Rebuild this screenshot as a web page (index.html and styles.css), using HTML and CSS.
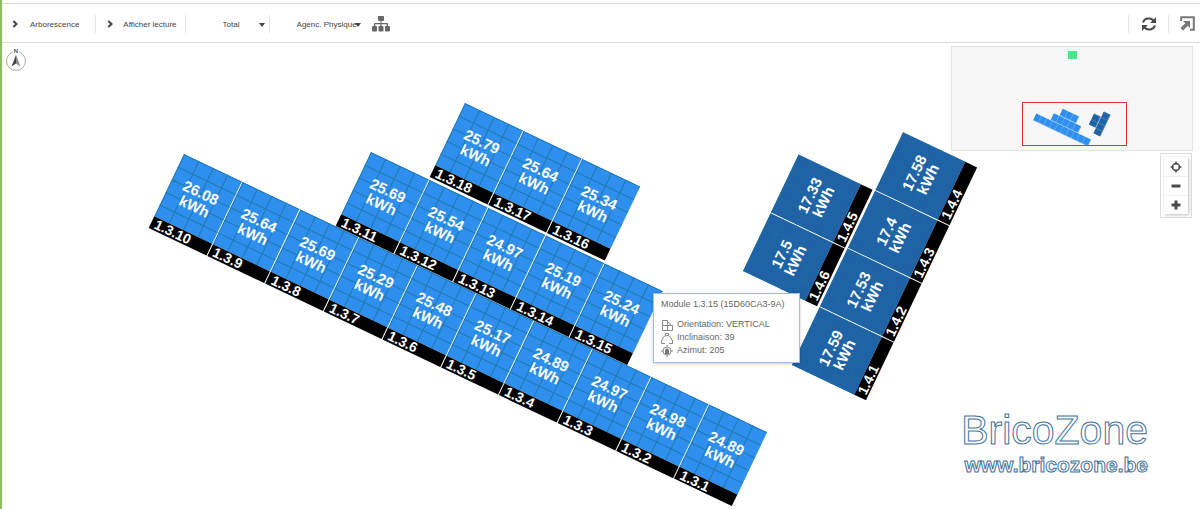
FILE: index.html
```
<!DOCTYPE html>
<html lang="fr">
<head>
  <meta charset="UTF-8">
  <meta name="viewport" content="width=device-width, initial-scale=1.0">
  <title>Agencement physique</title>
  <link rel="stylesheet" href="styles.css">
</head>
<body>
  <header class="toolbar">
    <button type="button" class="tool">
      <svg class="chevron" viewBox="0 0 6 8"><path d="M1.3 1 4.5 4 1.3 7"/></svg>
      Arborescence
    </button>
    <button type="button" class="tool">
      <svg class="chevron" viewBox="0 0 6 8"><path d="M1.3 1 4.5 4 1.3 7"/></svg>
      Afficher lecture
    </button>
    <div class="picker picker-period">
      <select aria-label="Période"><option>Total</option></select>
    </div>
    <div class="picker picker-layout">
      <select aria-label="Agencement"><option>Agenc. Physique</option></select>
    </div>
    <button type="button" class="icon-btn tree" aria-label="Arbre">
      <svg width="18" height="16" viewBox="0 0 18 16">
        <rect x="6" y="0" width="6" height="5" rx="1"/>
        <path d="M8.500 4h1v3H15a1 1 0 0 1 1 1v3h-1.300V8.300H9.600V11H8.400V8.300H3.300V11H2V8a1 1 0 0 1 1-1h5.500z"/>
        <rect x="0" y="10" width="5" height="5.500" rx="1"/>
        <rect x="6.500" y="10" width="5" height="5.500" rx="1"/>
        <rect x="13" y="10" width="5" height="5.500" rx="1"/>
      </svg>
    </button>
    <div class="right-tools">
      <button type="button" class="icon-btn" aria-label="Actualiser">
        <svg width="16" height="16" viewBox="0 0 16 16">
          <path class="arc" d="M2 6.500A6 5.500 0 0 1 12.500 4.500M14 9.500A6 5.500 0 0 1 3.500 11.500"/>
          <path d="M15 1v6H9.200zM1 15V9h5.800z"/>
        </svg>
      </button>
      <button type="button" class="icon-btn expand" aria-label="Plein écran">
        <svg width="16" height="16" viewBox="0 0 16 16">
          <path class="frame" d="M1.200 5V1.200h12.600v12.600H10"/>
          <path d="M3 5h7v7L7.800 9.800 3 14.500.500 12l4.800-4.700z"/>
        </svg>
      </button>
    </div>
  </header>

  <main class="map">
    <svg class="compass" width="22" height="26" viewBox="0 0 22 26">
      <circle cx="11" cy="15" r="9.500"/>
      <rect x="8" y="2" width="6" height="6"/>
      <text x="11" y="7" text-anchor="middle">N</text>
      <path class="dark" d="M11 9 6.500 20.500l4.500-3z"/>
      <path class="grey" d="M11 9l4.500 11.500-4.500-3z"/>
    </svg>

    <!-- String 1.3 -->
    <div class="array row-a">
      <div class="module"><p>26.08<br>kWh</p><b>1.3.10</b></div>
      <div class="module"><p>25.64<br>kWh</p><b>1.3.9</b></div>
      <div class="module"><p>25.69<br>kWh</p><b>1.3.8</b></div>
      <div class="module"><p>25.29<br>kWh</p><b>1.3.7</b></div>
      <div class="module"><p>25.48<br>kWh</p><b>1.3.6</b></div>
      <div class="module"><p>25.17<br>kWh</p><b>1.3.5</b></div>
      <div class="module"><p>24.89<br>kWh</p><b>1.3.4</b></div>
      <div class="module"><p>24.97<br>kWh</p><b>1.3.3</b></div>
      <div class="module"><p>24.98<br>kWh</p><b>1.3.2</b></div>
      <div class="module"><p>24.89<br>kWh</p><b>1.3.1</b></div>
    </div>
    <div class="array row-b">
      <div class="module"><p>25.69<br>kWh</p><b>1.3.11</b></div>
      <div class="module"><p>25.54<br>kWh</p><b>1.3.12</b></div>
      <div class="module"><p>24.97<br>kWh</p><b>1.3.13</b></div>
      <div class="module"><p>25.19<br>kWh</p><b>1.3.14</b></div>
      <div class="module"><p>25.24<br>kWh</p><b>1.3.15</b></div>
    </div>
    <div class="array row-c">
      <div class="module"><p>25.79<br>kWh</p><b>1.3.18</b></div>
      <div class="module"><p>25.64<br>kWh</p><b>1.3.17</b></div>
      <div class="module"><p>25.34<br>kWh</p><b>1.3.16</b></div>
    </div>

    <!-- String 1.4 -->
    <div class="array side col-a">
      <div class="module"><p>17.5<br>kWh</p><b>1.4.6</b></div>
      <div class="module"><p>17.33<br>kWh</p><b>1.4.5</b></div>
    </div>
    <div class="array side col-b">
      <div class="module"><p>17.59<br>kWh</p><b>1.4.1</b></div>
      <div class="module"><p>17.53<br>kWh</p><b>1.4.2</b></div>
      <div class="module"><p>17.4<br>kWh</p><b>1.4.3</b></div>
      <div class="module"><p>17.58<br>kWh</p><b>1.4.4</b></div>
    </div>

    <div class="tooltip" role="tooltip">
      <h2>Module 1.3.15 (15D60CA3-9A)</h2>
      <ul>
        <li>
          <svg width="12" height="12" viewBox="0 0 12 12"><path d="M1.500 1.500h5v10h-5zM1.500 6.500h10v5h-5M6.500 3.500c2 0 3 1 3 3"/></svg>
          Orientation: VERTICAL
        </li>
        <li>
          <svg width="12" height="12" viewBox="0 0 12 12"><path d="M1.500 8c0-3 2-4.500 4.500-4.500S10.500 5 10.500 8M4.500 3.500v-2h3v2M.500 8v3.500H4M11.500 8v3.500H8"/></svg>
          Inclinaison: 39
        </li>
        <li>
          <svg width="12" height="12" viewBox="0 0 12 12"><circle cx="6" cy="6" r="4"/><path d="M6 0v2M6 10v2M0 6h2M10 6h2"/><path class="fill" d="M6 3l2 2v4H4V5z"/></svg>
          Azimut: 205
        </li>
      </ul>
    </div>

    <svg class="minimap" width="242" height="105" viewBox="0 0 242 105">
      <defs>
        <pattern id="cells" width="64.500" height="82" patternUnits="userSpaceOnUse">
          <rect width="60" height="76" fill="#2e8fee"/>
        </pattern>
        <pattern id="cellsDark" width="64.500" height="82" patternUnits="userSpaceOnUse">
          <rect width="60" height="76" fill="#1f63a6"/>
        </pattern>
      </defs>
      <rect class="home" x="117" y="5" width="9" height="8"/>
      <g transform="translate(68 53) scale(.094)">
        <g fill="#8cc0f4">
          <rect width="645" height="80" transform="translate(184 154) rotate(25.400)"/>
          <rect width="322" height="80" transform="translate(371 152) rotate(25.400)"/>
          <rect width="193" height="80" transform="translate(465 103) rotate(25.400)"/>
        </g>
        <g fill="url(#cells)">
          <rect width="645" height="80" transform="translate(184 154) rotate(25.400)"/>
          <rect width="322" height="80" transform="translate(371 152) rotate(25.400)"/>
          <rect width="193" height="80" transform="translate(465 103) rotate(25.400)"/>
        </g>
        <g fill="#6e9cc8">
          <rect width="129" height="80" transform="translate(743 271) rotate(-64.600)"/>
          <rect width="258" height="80" transform="translate(792 365) rotate(-64.600)"/>
        </g>
        <g fill="url(#cellsDark)">
          <rect width="129" height="80" transform="translate(743 271) rotate(-64.600)"/>
          <rect width="258" height="80" transform="translate(792 365) rotate(-64.600)"/>
        </g>
      </g>
      <rect class="view" x="71.500" y="56.500" width="104" height="43"/>
    </svg>

    <div class="zoom">
      <div class="zoom-buttons">
        <button type="button" aria-label="Recentrer">
          <svg width="12" height="12" viewBox="0 0 12 12"><circle cx="6" cy="6" r="3.500"/><path d="M6 .500v3M6 8.500v3M.500 6h3M8.500 6h3"/></svg>
        </button>
        <button type="button" aria-label="Zoom arrière">
          <svg width="12" height="12" viewBox="0 0 12 12"><path class="thick" d="M1.500 6h9"/></svg>
        </button>
        <button type="button" aria-label="Zoom avant">
          <svg width="12" height="12" viewBox="0 0 12 12"><path class="thick" d="M1.500 6h9M6 1.500v9"/></svg>
        </button>
      </div>
    </div>

    <div class="watermark">
      <div class="brand">BricoZone</div>
      <div class="site">www.bricozone.be</div>
    </div>
  </main>
</body>
</html>
```
FILE: styles.css
```
* { margin: 0; padding: 0; box-sizing: border-box; }

body {
  min-height: 100vh;
  display: flex;
  flex-direction: column;
  border-left: 2px solid #8cc152;
  font-family: "Liberation Sans", Arial, sans-serif;
  font-size: 8px;
  color: #444;
  background: #fff;
}

button, select {
  font: inherit;
  color: inherit;
  background: none;
  border: none;
  cursor: pointer;
}
svg { display: block; }

/* Toolbar */
.toolbar {
  display: flex;
  align-items: center;
  height: 40px;
  margin-top: 3px;
  padding-top: 2px;
  border-top: 1px solid #dcdcdc;
  border-bottom: 1px solid #dcdcdc;
}
.tool {
  display: flex;
  align-items: center;
  gap: 12px;
  height: 18px;
  padding: 0 16px 0 10px;
  border-right: 1px solid #e2e2e2;
}
.tool + .tool {
  gap: 10px;
  padding: 0 8px 0 11px;
}
.chevron {
  width: 6px;
  height: 8px;
  fill: none;
  stroke: #444;
  stroke-width: 2;
}
.picker {
  position: relative;
  height: 18px;
}
.picker select {
  appearance: none;
  width: 100%;
  height: 18px;
}
.picker::after {
  content: "";
  position: absolute;
  top: 8px;
  right: 4px;
  border: 3px solid transparent;
  border-top: 4px solid #444;
  border-bottom: none;
}
.picker-period {
  width: 84px;
  border-right: 1px solid #e2e2e2;
}
.picker-period select { padding-left: 37px; }
.picker-layout { width: 92px; }
.picker-layout select { padding-left: 27px; }
.picker-layout::after { right: 1px; }
.icon-btn {
  display: flex;
  align-items: center;
  justify-content: center;
  width: 40px;
  height: 18px;
  fill: #4a4a4a;
}
.tree { fill: #666; width: 38px; }
.right-tools {
  display: flex;
  margin-left: auto;
}
.right-tools .icon-btn { border-left: 1px solid #e2e2e2; }
.right-tools .expand {
  width: 32px;
  padding-left: 7px;
  fill: #777;
}
.arc {
  fill: none;
  stroke: #4a4a4a;
  stroke-width: 2;
}
.frame {
  fill: none;
  stroke: #777;
  stroke-width: 2;
}

/* Map */
.map {
  position: relative;
  flex: 1;
  overflow: hidden;
}
.compass {
  position: absolute;
  left: 3px;
  top: 3px;
  font-size: 6px;
  font-weight: bold;
}
.compass circle { fill: none; stroke: #aaa; }
.compass rect { fill: #fff; }
.compass text { fill: #555; }
.compass .dark { fill: #444; }
.compass .grey { fill: #888; }

.array {
  position: absolute;
  display: flex;
  gap: 1px;
  transform: rotate(25.5deg);
  transform-origin: 0 0;
}
.row-a { left: 182px; top: 111px; width: 646px; }
.row-b { left: 369px; top: 109px; width: 323px; }
.row-c { left: 463px; top: 60px; width: 194px; }
.side { transform: rotate(-64.5deg); }
.col-a { left: 741px; top: 228px; width: 129px; }
.col-b { left: 790px; top: 322px; width: 258px; }

.module {
  flex: 1;
  color: #fff;
  font-size: 15px;
  font-weight: bold;
}
.module p {
  display: flex;
  align-items: center;
  justify-content: center;
  height: 69px;
  line-height: 15px;
  text-align: center;
  background-color: #2e8fee;
  background-image:
    linear-gradient(to right, #1f78ac 1px, transparent 1px),
    linear-gradient(#1f78ac 1px, transparent 1px);
  background-size: 16px 14px;
}
.module b {
  display: block;
  height: 13px;
  padding-left: 4px;
  font-size: 14px;
  line-height: 13px;
  background: #000;
}
.side .module p {
  background-color: #1f63a6;
  background-image:
    linear-gradient(to right, #1c6aa0 1px, transparent 1px),
    linear-gradient(#1c6aa0 1px, transparent 1px);
}

.tooltip {
  position: absolute;
  left: 651px;
  top: 250px;
  width: 147px;
  padding: 5px 7px;
  font-size: 9px;
  color: #666;
  background: #fff;
  border: 1px solid #a9b9e6;
  box-shadow: 0 1px 3px rgba(0, 0, 0, 0.2);
}
.tooltip h2 {
  margin-bottom: 8px;
  font-size: 9px;
  font-weight: normal;
  line-height: 11px;
  white-space: nowrap;
}
.tooltip ul { list-style: none; }
.tooltip li {
  display: flex;
  align-items: center;
  gap: 4px;
  line-height: 13px;
}
.tooltip svg { fill: none; stroke: #888; }
.tooltip .fill { fill: #777; stroke: none; }

.minimap {
  position: absolute;
  top: 3px;
  right: 7px;
  background: #f7f7f7;
  outline: 1px solid #e2e2e2;
  outline-offset: -1px;
}
.minimap .home { fill: #3fe98c; }
.minimap .view { fill: none; stroke: #e03232; }

.zoom {
  position: absolute;
  top: 110px;
  right: 8px;
  padding: 3px;
  background: #fff;
  border: 1px solid #ddd;
}
.zoom-buttons {
  width: 24px;
  box-shadow: 1px 1px 3px rgba(0, 0, 0, 0.25);
}
.zoom button {
  display: flex;
  align-items: center;
  justify-content: center;
  width: 100%;
  height: 19px;
}
.zoom button + button { border-top: 1px solid #f0f0f0; }
.zoom svg { fill: none; stroke: #4a4a4a; stroke-width: 1.5; }
.zoom .thick { stroke-width: 3; }

.watermark {
  position: absolute;
  top: 366px;
  right: 52px;
  text-align: right;
  color: #fff;
  -webkit-text-stroke: 1px #44719c;
}
.brand {
  font-size: 41px;
  line-height: 43px;
}
.site {
  font-size: 21px;
  font-weight: bold;
  line-height: 26px;
}
```
